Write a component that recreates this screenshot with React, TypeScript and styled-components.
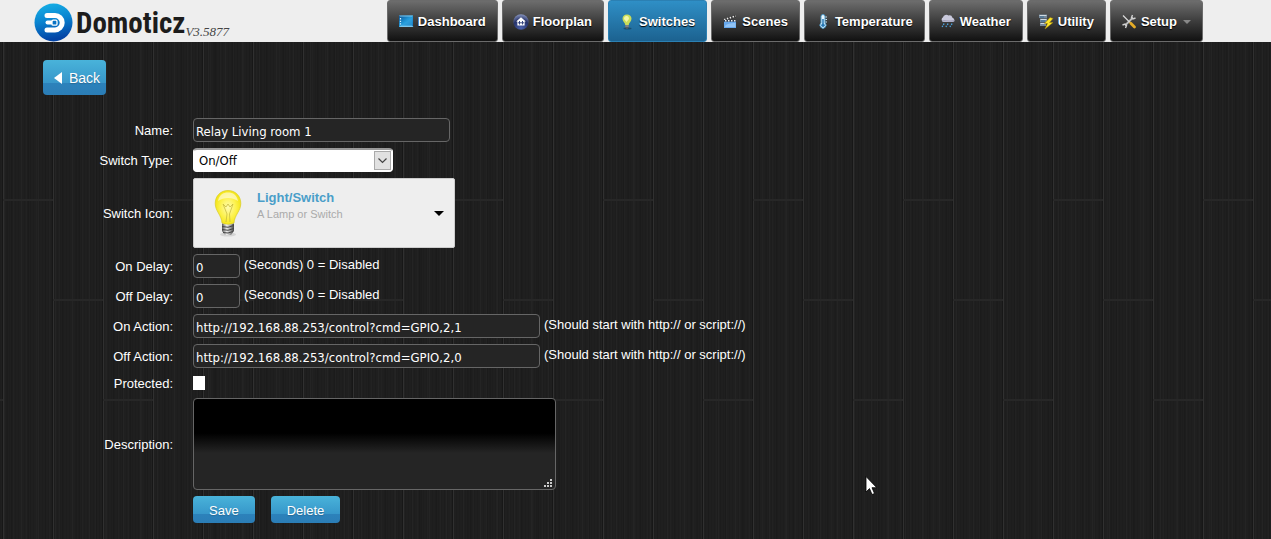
import React from "react";
import styled, { createGlobalStyle, css } from "styled-components";

const GlobalStyle = createGlobalStyle`
  * { box-sizing: border-box; }
  html { min-height: 100%; background: #1e1e1e; }
  body {
    margin: 0;
    min-height: 100vh;
    color: #fff;
    font: 13px/20px "Liberation Sans", Arial, sans-serif;
    background-color: #1e1e1e;
    background-image:
      conic-gradient(from 90deg at 100px 598px, #272727 90deg, transparent 0),
      conic-gradient(from 90deg at 100px 598px, #272727 90deg, transparent 0),
      conic-gradient(from 90deg at 100px 598px, #272727 90deg, transparent 0),
      repeating-linear-gradient(90deg, #171717 0 1px, #303030 1px 2px, transparent 2px 50px),
      repeating-linear-gradient(90deg, transparent 0 4px, #242424 4px 5px, transparent 5px 11px, #1b1b1b 11px 12px, transparent 12px 17px),
      repeating-linear-gradient(90deg, transparent 0 3px, #222 3px 4px, transparent 4px 7px, #1c1c1c 7px 8px, transparent 8px 13px, #222 13px 14px, transparent 14px 23px),
      repeating-linear-gradient(90deg, #1d1d1d 0 1px, #1f1f1f 1px 3px);
    background-size: 150px 600px, 150px 600px, 150px 600px, 50px 100%, auto, auto, auto;
    background-position: -97px 201px, -47px 301px, 3px 401px, 2px 0, 0 0, 0 0, 0 0;
  }
`;

const Header = styled.header`
  display: flex;
  height: 42px;
  padding: 0 68px 0 34px;
  background: #eee;
`;

const Brand = styled.a`
  display: flex;
  align-items: center;
  padding-top: 3px;
  color: #1c1c1c;
  text-decoration: none;
`;

const BrandName = styled.span`
  margin-left: 3px;
  font: bold 29px/38px "Roboto Condensed", "Open Sans Condensed", Lato, sans-serif;
`;

const Version = styled.span`
  align-self: flex-end;
  padding-bottom: 1px;
  color: #444;
  font: italic 13px/18px "Liberation Serif", Georgia, serif;
`;

const Nav = styled.nav`
  display: flex;
  gap: 4px;
  margin-left: auto;
`;

const NavItem = styled.a<{ $active?: boolean }>`
  display: flex;
  align-items: center;
  gap: 4px;
  padding: 2px 11px 0 10px;
  border: 1px solid ${(p) => (p.$active ? "#2b80b3" : "#6b6b6b")};
  border-radius: 3px;
  color: #fff;
  font-weight: bold;
  white-space: nowrap;
  text-decoration: none;
  text-shadow: 0 1px 1px #000;
  background: ${(p) =>
    p.$active
      ? "linear-gradient(#2f8fc6, #1c6290)"
      : "linear-gradient(#6d6d6d, #3d3d3d 50%, #111)"};
`;

const NavCaret = styled.span`
  margin-left: 2px;
  border: 4px solid transparent;
  border-top-color: #888;
  border-bottom: 0;
`;

const Main = styled.main`
  padding: 18px 43px 16px;
`;

const blue = css`
  border: 0;
  border-radius: 4px;
  color: #fff;
  font: 13px/20px "Liberation Sans", Arial, sans-serif;
  text-shadow: 0 1px 1px #2a6a94;
  background: linear-gradient(#49b3da, #3797ca 66%, #2c82bb 67%, #2b7db6);
`;

const BackButton = styled.button`
  ${blue}
  display: flex;
  align-items: center;
  gap: 7px;
  height: 35px;
  padding: 0 6px 0 11px;
  font-size: 14px;
`;

const ActionButton = styled.button`
  ${blue}
  height: 27px;
  padding: 2px 16px 0;
`;

const Form = styled.form`
  display: grid;
  gap: 6px;
  margin-top: 23px;
`;

const Row = styled.div`
  display: grid;
  grid-template-columns: 130px 1fr;
  column-gap: 20px;
  align-items: center;
`;

const Label = styled.label`
  padding-top: 2px;
  line-height: 16px;
  text-align: right;
`;

const Field = styled.div<{ $gap?: number }>`
  display: flex;
  gap: ${(p) => p.$gap ?? 4}px;
  grid-column: 2;
`;

const Hint = styled.span`
  line-height: 22px;
`;

const entry = css`
  border: 1px solid #666;
  border-radius: 4px;
  color: #fff;
  background: #252525;
  font: 13px/18px "DejaVu Sans Condensed", Tahoma, sans-serif;
`;

const TextInput = styled.input<{ $width: number }>`
  ${entry}
  width: ${(p) => p.$width}px;
  height: 24px;
  padding: 3px 2px 1px;
`;

const Description = styled.textarea`
  ${entry}
  display: block;
  width: 363px;
  height: 92px;
  padding: 4px;
  resize: none;
  background: linear-gradient(#000 38%, #252525 60%);
`;

const Overlaid = styled.div`
  position: relative;
  display: flex;
`;

const Grip = styled.svg`
  position: absolute;
  right: 3px;
  bottom: 2px;
`;

const Select = styled.select`
  appearance: none;
  width: 200px;
  height: 24px;
  padding: 0 24px 0 5px;
  border: 1px solid #fff;
  border-top: 2px solid #999;
  border-radius: 4px;
  color: #000;
  background: #fff;
  font: 13px/18px "DejaVu Sans Condensed", Tahoma, sans-serif;
`;

const SelectArrow = styled.svg`
  position: absolute;
  top: 3px;
  right: 2px;
  pointer-events: none;
`;

const IconPicker = styled.button`
  display: flex;
  align-items: flex-start;
  width: 262px;
  height: 70px;
  padding: 10px 10px 10px 20px;
  border: 1px solid #ccc;
  border-radius: 2px;
  background: #eee;
  text-align: left;
  font: 13px/16px "Liberation Sans", Arial, sans-serif;
`;

const PickerText = styled.span`
  display: grid;
  flex: 1;
  padding: 1px 0 0 15px;
`;

const PickerTitle = styled.strong`
  color: #4a9ec9;
`;

const PickerNote = styled.span`
  color: #aaa;
  font-size: 11px;
`;

const PickerCaret = styled.span`
  align-self: center;
  border: 5px solid transparent;
  border-top-color: #000;
  border-bottom: 0;
`;

const Check = styled.input`
  appearance: none;
  width: 12px;
  height: 14px;
  margin: 2px 0;
  border: 0;
  background: #fff;
`;

const Pointer = styled.svg`
  position: absolute;
  left: 865px;
  top: 475px;
  pointer-events: none;
`;

const Logo = () => (
  <svg width="39" height="39" viewBox="0 0 39 39" aria-hidden="true">
    <defs>
      <linearGradient id="logo" x1="0" y1="0" x2="0.2" y2="1">
        <stop offset="0" stopColor="#17b4e8" />
        <stop offset="0.5" stopColor="#0a84d0" />
        <stop offset="1" stopColor="#0344a6" />
      </linearGradient>
    </defs>
    <circle cx="19.5" cy="19.5" r="19" fill="url(#logo)" />
    <path d="M13 12.500H21A7.200 7.200 0 0 1 21 26.900H13" fill="none" stroke="#fff" strokeWidth="5" strokeLinecap="round" />
    <path d="M13.500 19.500H19" stroke="#fff" strokeWidth="4" strokeLinecap="round" />
    <rect x="18" y="17.200" width="5" height="5" rx="1.200" fill="#0872c5" stroke="#fff" strokeWidth="1.300" />
  </svg>
);

const DashboardIcon = () => (
  <svg width="16" height="16" viewBox="0 0 16 16" aria-hidden="true">
    <defs>
      <linearGradient id="dash" x1="0" y1="0" x2="1" y2="1">
        <stop offset="0" stopColor="#0a4f91" />
        <stop offset="0.5" stopColor="#249cdb" />
        <stop offset="1" stopColor="#0b66ad" />
      </linearGradient>
    </defs>
    <path d="M1 1.500H15V13H1Z" fill="url(#dash)" />
    <path d="M1 1.500H15L14 2.500H2ZM1 13L3 11.500H14L15.500 13Z" fill="#7cc7ee" />
    <path d="M3 11.500L14.500 3V11.500Z" fill="#3aa9e6" opacity="0.5" />
    <path d="M2.500 4V5.500M2.500 6.800V8M2.500 9.300V10.500" stroke="#d7f2ff" strokeWidth="1.200" />
  </svg>
);

const FloorplanIcon = () => (
  <svg width="16" height="16" viewBox="0 0 16 16" aria-hidden="true">
    <defs>
      <radialGradient id="floor" cx="0.5" cy="0.9" r="0.9">
        <stop offset="0" stopColor="#4b62ad" />
        <stop offset="0.6" stopColor="#263268" />
        <stop offset="1" stopColor="#8794bd" />
      </radialGradient>
    </defs>
    <circle cx="8" cy="8" r="7.700" fill="url(#floor)" />
    <path d="M8 3.200L12.800 7.500H11.600V11.500H4.400V7.500H3.200Z" fill="#fff" />
    <path d="M6.500 7V10.500M9.500 7V10.500M5 8.800H11" stroke="#35457f" strokeWidth="1" />
  </svg>
);

const SmallBulbIcon = () => (
  <svg width="16" height="16" viewBox="0 0 16 16" aria-hidden="true">
    <ellipse cx="8.500" cy="14.600" rx="4" ry="1" fill="#174d70" />
    <path d="M8 .5C5.200.5 3.500 2.400 3.500 4.800C3.500 7.400 6 8.500 6.300 11H9.700C10 8.500 12.500 7.400 12.500 4.800C12.500 2.400 10.800.5 8 .5Z" fill="#c9dc5a" />
    <path d="M7 2C5.500 2.300 5 3.500 5 5L7.500 8L10 5C10 3 9 1.600 7 2Z" fill="#f1f7a8" />
    <path d="M6.300 11H9.700V13.500L8.700 14.800H7.300L6.300 13.500Z" fill="#575d62" />
    <path d="M6.300 12H9.700" stroke="#ccc" strokeWidth=".7" />
  </svg>
);

const ScenesIcon = () => (
  <svg width="16" height="16" viewBox="0 0 16 16" aria-hidden="true">
    <path d="M1.500 5L13.500 1L14.200 3.200L2.200 7Z" fill="#333" />
    <path d="M2 5.700L13.800 2" stroke="#eee" strokeWidth="1.700" strokeDasharray="1.500 1.500" />
    <path d="M2 6H14V14H2Z" fill="#66a8ed" />
    <path d="M2 6.800H14" stroke="#28354a" strokeWidth="1.800" />
    <path d="M3 6.800H14" stroke="#eee" strokeWidth="1.400" strokeDasharray="1.500 1.500" />
    <path d="M3 13C3 10 8 9 13.500 9V13Z" fill="#91c3f5" />
  </svg>
);

const ThermometerIcon = () => (
  <svg width="16" height="16" viewBox="0 0 16 16" aria-hidden="true">
    <path d="M6 2.500A2 2 0 0 1 10 2.500V9A3 3 0 1 1 6 9Z" fill="#e9f7ff" stroke="#4b9ac9" strokeWidth="1" />
    <path d="M8 5V11" stroke="#2678b4" strokeWidth="1.500" />
    <circle cx="8" cy="11.300" r="1.800" fill="#2678b4" />
    <path d="M10.500 3H12M10.500 5.500H12M10.500 8H12" stroke="#c5e7fa" strokeWidth="1" />
  </svg>
);

const WeatherIcon = () => (
  <svg width="16" height="16" viewBox="0 0 16 16" aria-hidden="true">
    <path d="M3.500 8A2.600 2.600 0 0 1 3 3.200A3.500 3.500 0 0 1 8.500 1.500A3.300 3.300 0 0 1 12.500 3.700A2.300 2.300 0 0 1 13 8Z" fill="#c9c9dc" />
    <path d="M2 7C5 6 9 8 14.500 6.500" stroke="#a4a4be" strokeWidth="1.300" fill="none" />
    <path d="M4 9.500L3.400 11M8 9.500L7.400 11M12 9.500L11.400 11M2.700 11.800L2.200 13M6.500 11.800L6 13M10.500 11.800L10 13" stroke="#4aa0dc" strokeWidth="1.300" />
  </svg>
);

const UtilityIcon = () => (
  <svg width="16" height="16" viewBox="0 0 16 16" aria-hidden="true">
    <path d="M1 .500H9V4H1ZM2 4.500H9V8H2ZM2 8.500H8V12H2Z" fill="#75889a" />
    <path d="M1.500 1.500H8.500M2.500 5.500H8.500M2.500 9.500H7.500" stroke="#cfdae2" strokeWidth="1" />
    <path d="M2 3H6M3 7H7" stroke="#3a6d95" strokeWidth="1" />
    <path d="M12 3.500L6.500 9.500H9.500L7 15L15 8.500H11.500L15 4.500Z" fill="#ffe629" stroke="#a78a0a" strokeWidth=".5" />
  </svg>
);

const ToolsIcon = () => (
  <svg width="16" height="16" viewBox="0 0 16 16" aria-hidden="true">
    <path d="M12 3.500L4 11.500" stroke="#bdbdbd" strokeWidth="1.800" />
    <path d="M11.500 1L10.500 3.500L12 5L14.500 4M1.500 11L4 10L5.500 11.500L4.500 14" stroke="#d0d0d0" strokeWidth="1.400" fill="none" />
    <path d="M2 1.500L9 8.500" stroke="#d8d8d8" strokeWidth="1.300" />
    <path d="M9.800 9.300L13.500 13" stroke="#e5ac27" strokeWidth="2.800" strokeLinecap="round" />
  </svg>
);

const LightBulb = () => (
  <svg width="28" height="48" viewBox="0 0 28 48" aria-hidden="true">
    <defs>
      <radialGradient id="glass" cx="0.5" cy="0.5" r="0.6">
        <stop offset="0" stopColor="#fffbb0" />
        <stop offset="0.5" stopColor="#fdf250" />
        <stop offset="1" stopColor="#f0e000" />
      </radialGradient>
      <linearGradient id="metal">
        <stop offset="0" stopColor="#555" />
        <stop offset="0.4" stopColor="#f2f2f2" />
        <stop offset="1" stopColor="#444" />
      </linearGradient>
    </defs>
    <ellipse cx="14" cy="45.500" rx="8" ry="2" fill="#d5d5d5" />
    <path d="M14 1.500C6 1.500 1.200 7.500 1.200 14.500C1.200 22 7.500 26 8 34Q14 37 20 34C20.500 26 26.800 22 26.800 14.500C26.800 7.500 22 1.500 14 1.500Z" fill="url(#glass)" stroke="#d8cc26" strokeWidth=".7" />
    <path d="M4 12C5 6 9 3.500 14 3.500S23 6 24 12C18 8 10 8 4 12Z" fill="#fffce0" opacity="0.65" />
    <path d="M12 33L13 25L9 15M16 33L15.500 25L19 15M9 15L12 18L14 15L16 18L19 15" fill="none" stroke="#c2b43a" strokeWidth=".7" />
    <path d="M8 34.500Q14 37 20 34.500V42L17 46H11L8 42Z" fill="url(#metal)" />
    <path d="M8 37.500Q14 39.500 20 36.500M8 40.500Q14 42.500 20 39.500M9 43.500Q14 45 19 42.500" stroke="#444" strokeWidth="1" fill="none" />
  </svg>
);

const navItems = [
  { text: "Dashboard", Icon: DashboardIcon },
  { text: "Floorplan", Icon: FloorplanIcon },
  { text: "Switches", Icon: SmallBulbIcon, active: true },
  { text: "Scenes", Icon: ScenesIcon },
  { text: "Temperature", Icon: ThermometerIcon },
  { text: "Weather", Icon: WeatherIcon },
  { text: "Utility", Icon: UtilityIcon },
  { text: "Setup", Icon: ToolsIcon, menu: true },
];

const inputs = {
  delays: [
    { id: "on-delay", label: "On Delay:" },
    { id: "off-delay", label: "Off Delay:" },
  ],
  actions: [
    { id: "on-action", label: "On Action:", url: "http://192.168.88.253/control?cmd=GPIO,2,1" },
    { id: "off-action", label: "Off Action:", url: "http://192.168.88.253/control?cmd=GPIO,2,0" },
  ],
};

export default function App() {
  return (
    <>
      <GlobalStyle />
      <Header>
        <Brand href="#">
          <Logo />
          <BrandName>Domoticz</BrandName>
          <Version>V3.5877</Version>
        </Brand>
        <Nav>
          {navItems.map(({ text, Icon, active, menu }) => (
            <NavItem key={text} href="#" $active={active}>
              <Icon />
              {text}
              {menu && <NavCaret />}
            </NavItem>
          ))}
        </Nav>
      </Header>
      <Main>
        <BackButton type="button">
          <svg width="8" height="12" viewBox="0 0 8 12" aria-hidden="true">
            <path d="M8 0V12L0 6Z" fill="#fff" />
          </svg>
          Back
        </BackButton>
        <Form onSubmit={(e) => e.preventDefault()}>
          <Row>
            <Label htmlFor="name">Name:</Label>
            <Field>
              <TextInput id="name" $width={257} defaultValue="Relay Living room 1" />
            </Field>
          </Row>
          <Row>
            <Label htmlFor="type">Switch Type:</Label>
            <Field>
              <Overlaid>
                <Select id="type">
                  <option>On/Off</option>
                </Select>
                <SelectArrow width="17" height="19" viewBox="0 0 17 19" aria-hidden="true">
                  <rect x=".5" y=".5" width="16" height="18" fill="#e1e1e1" stroke="#aaa" />
                  <path d="M4.500 7.500L8.500 11.500L12.500 7.500" fill="none" stroke="#444" strokeWidth="1.200" />
                </SelectArrow>
              </Overlaid>
            </Field>
          </Row>
          <Row>
            <Label htmlFor="icon">Switch Icon:</Label>
            <Field>
              <IconPicker id="icon" type="button">
                <LightBulb />
                <PickerText>
                  <PickerTitle>Light/Switch</PickerTitle>
                  <PickerNote>A Lamp or Switch</PickerNote>
                </PickerText>
                <PickerCaret />
              </IconPicker>
            </Field>
          </Row>
          {inputs.delays.map(({ id, label }) => (
            <Row key={id}>
              <Label htmlFor={id}>{label}</Label>
              <Field>
                <TextInput id={id} $width={47} defaultValue="0" />
                <Hint>(Seconds) 0 = Disabled</Hint>
              </Field>
            </Row>
          ))}
          {inputs.actions.map(({ id, label, url }) => (
            <Row key={id}>
              <Label htmlFor={id}>{label}</Label>
              <Field>
                <TextInput id={id} $width={347} defaultValue={url} />
                <Hint>(Should start with http:// or script://)</Hint>
              </Field>
            </Row>
          ))}
          <Row>
            <Label htmlFor="protected">Protected:</Label>
            <Field>
              <Check id="protected" type="checkbox" />
            </Field>
          </Row>
          <Row>
            <Label htmlFor="description">Description:</Label>
            <Field>
              <Overlaid>
                <Description id="description" />
                <Grip width="9" height="9" viewBox="0 0 9 9" aria-hidden="true">
                  <path d="M6 0h2v2h-2zM3 3h2v2h-2zM6 3h2v2h-2zM0 6h2v2h-2zM3 6h2v2h-2zM6 6h2v2h-2z" fill="#ccc" />
                </Grip>
              </Overlaid>
            </Field>
          </Row>
          <Row>
            <Field $gap={16}>
              <ActionButton type="submit">Save</ActionButton>
              <ActionButton type="button">Delete</ActionButton>
            </Field>
          </Row>
        </Form>
      </Main>
      <Pointer width="13" height="21" viewBox="0 0 13 21" aria-hidden="true">
        <path d="M1 1.500V17L4.500 13.600L7 19.500L9.500 18.500L7 12.700H11.800Z" fill="#fff" stroke="#000" strokeWidth=".8" />
      </Pointer>
    </>
  );
}
